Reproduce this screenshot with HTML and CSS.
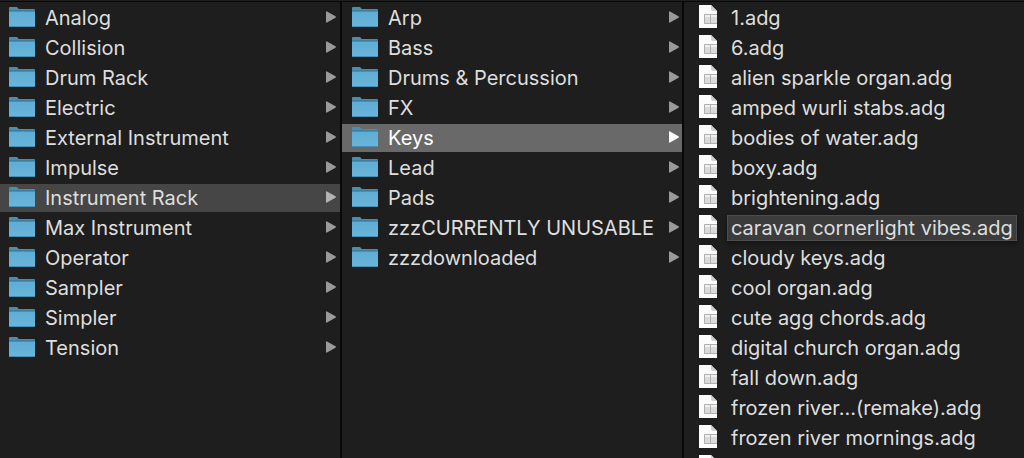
FILE: index.html
```html
<!DOCTYPE html>
<html lang="en">

<head>
    <meta charset="UTF-8">
    <meta name="viewport" content="width=device-width, initial-scale=1.0">
    <title>Keys</title>
    <link rel="stylesheet" href="styles.css">
</head>

<body>
    <svg class="sprite" aria-hidden="true">
        <linearGradient id="folder-fill" x1="0" y1="0" x2="0" y2="1">
            <stop offset="0" stop-color="#5eadd6"/>
            <stop offset="1" stop-color="#6ab5da"/>
        </linearGradient>
        <symbol id="folder" viewBox="0 0 26 20">
            <path fill="#4a8eac" d="M0 1Q0 0 1 0H7.500Q8.300 0 9 1L9.700 2H25Q26 2 26 3V6H0Z"/>
            <path fill="#34708e" d="M0 3.500H26V5H0Z"/>
            <path fill="url(#folder-fill)" d="M0 4.500H26V19Q26 20 25 20H1Q0 20 0 19Z"/>
            <path fill="#488fb4" d="M0 19H26Q26 20 25 20H1Q0 20 0 19Z"/>
        </symbol>
        <symbol id="file" viewBox="0 0 18 23">
            <path fill="#fcfcfc" d="M0 0H12L18 6V23H0Z"/>
            <path fill="#d0d0d0" d="M12 0L18 6H14Q12 6 12 4Z"/>
            <path fill="#dadada" d="M5 9H18V19H5Z"/>
            <path fill="#f0f0f0" d="M6 10H18V12H6Z"/>
            <path fill="none" stroke="#b0b0b0" d="M18 9.500H5.500V18.500H18M11.500 9V18"/>
        </symbol>
        <symbol id="arrow" viewBox="0 0 10 12">
            <path fill="currentColor" d="M0 1Q0 0 1 .4L9.500 5.300Q10.300 6 9.500 6.700L1 11.600Q0 12 0 11Z"/>
        </symbol>
    </svg>

    <main class="browser">
        <nav class="column first" aria-label="Instruments"></nav>
        <nav class="column" aria-label="Instrument Rack"></nav>
        <nav class="column files" aria-label="Keys"></nav>
    </main>
    <script src="script.js"></script>
</body>

</html>
```
FILE: styles.css
```css
body {
    height: 100vh;
    margin: 0;
    overflow: hidden;
    background-color: #1e1e1e;
    color: #dedede;
    font-family: Inter, "Liberation Sans", sans-serif;
    font-size: 20px;
}

.sprite {
    position: absolute;
    width: 0;
    height: 0;
}

.browser {
    display: flex;
    box-sizing: border-box;
    height: 100%;
    padding-top: 1px;
}

.column {
    display: flex;
    flex: 1;
    flex-direction: column;
    gap: 2px;
    min-width: 0;
    padding-top: 2px;
    overflow: hidden;
    border-top: 1px solid #080808;
    border-left: 2px solid #080808;
}

.first {
    border-left: none;
}

.row {
    display: flex;
    flex: none;
    align-items: center;
    box-sizing: border-box;
    height: 28px;
    padding: 0 3px 0 10px;
    color: inherit;
    text-decoration: none;
    white-space: nowrap;
}

.first .row {
    padding: 0 4px 0 9px;
}

.files .row {
    padding-left: 15px;
}

.folder {
    flex: none;
    width: 26px;
    height: 20px;
    margin-bottom: 2px;
}

.file {
    flex: none;
    width: 18px;
    height: 23px;
    margin-bottom: 3px;
}

.arrow {
    flex: none;
    width: 10px;
    height: 12px;
    margin-bottom: 2px;
    margin-left: auto;
    color: #9a9a9a;
}

.name {
    margin-left: 10px;
    line-height: 26px;
}

.files .name {
    padding: 0 4px;
}

.open {
    background-color: #464646;
}

.open .arrow {
    color: #b4b4b4;
}

.active {
    background-color: #696969;
    color: #ffffff;
}

.active .arrow {
    color: #ffffff;
}

.selected .name {
    background-color: #3c3c3c;
    box-shadow: inset 0 0 0 1px #4c4c4c, 0 2px 4px #141414;
}
```
FILE: script.js
```js
const instruments = ["Analog", "Collision", "Drum Rack", "Electric", "External Instrument", "Impulse",
    "Instrument Rack", "Max Instrument", "Operator", "Sampler", "Simpler", "Tension"];

const racks = ["Arp", "Bass", "Drums & Percussion", "FX", "Keys", "Lead", "Pads",
    "zzzCURRENTLY UNUSABLE", "zzzdownloaded"];

// the last row is cut off by the bottom of the window
const presets = ["1.adg", "6.adg", "alien sparkle organ.adg", "amped wurli stabs.adg", "bodies of water.adg",
    "boxy.adg", "brightening.adg", "caravan cornerlight vibes.adg", "cloudy keys.adg", "cool organ.adg",
    "cute agg chords.adg", "digital church organ.adg", "fall down.adg", "frozen river…(remake).adg",
    "frozen river mornings.adg", ""];

const columns = document.querySelectorAll(".column");

function icon(name) {
    return `<svg class="${name}" aria-hidden="true"><use href="#${name}"/></svg>`;
}

function fill(column, names, type, current, state) {
    names.forEach((name) => {
        const row = document.createElement("a");
        row.className = "row";
        row.href = "#";
        if (name === current) {
            row.classList.add(state);
            row.setAttribute("aria-current", "true");
        }
        row.innerHTML = icon(type) + '<span class="name"></span>' + (type === "folder" ? icon("arrow") : "");
        row.querySelector(".name").textContent = name;
        column.appendChild(row);
    });
}

fill(columns[0], instruments, "folder", "Instrument Rack", "open");
fill(columns[1], racks, "folder", "Keys", "active");
fill(columns[2], presets, "file", "caravan cornerlight vibes.adg", "selected");
```
